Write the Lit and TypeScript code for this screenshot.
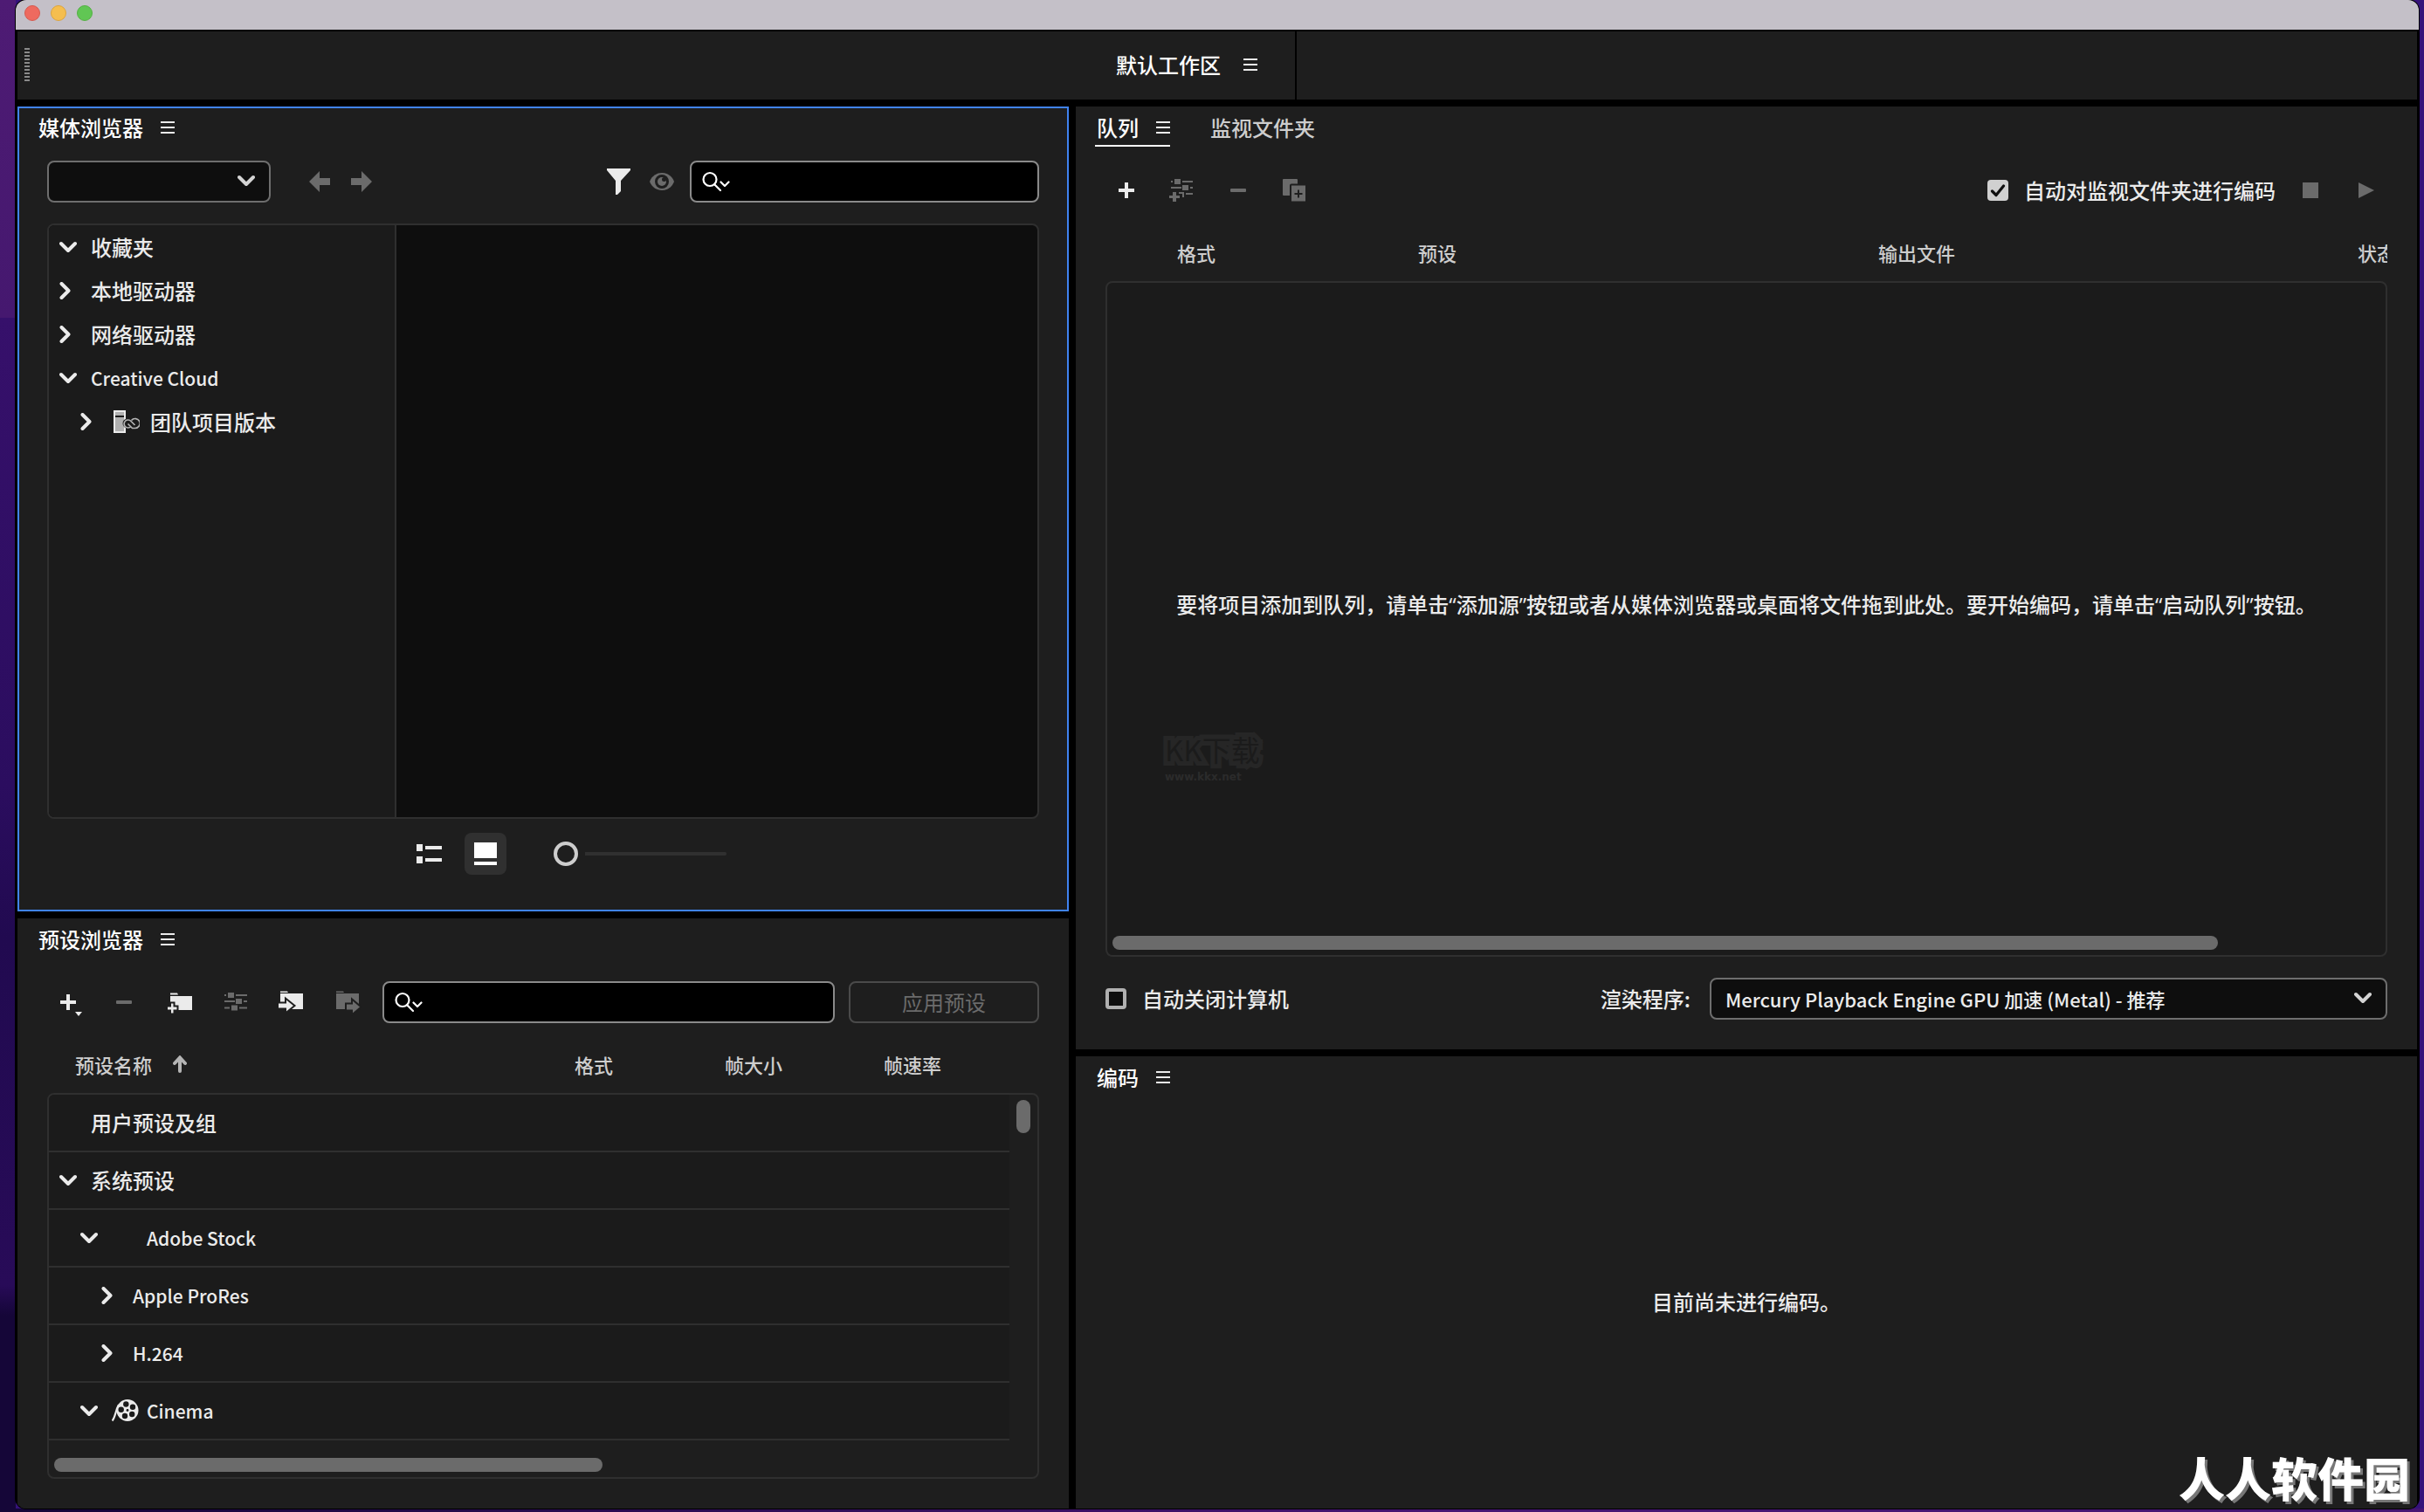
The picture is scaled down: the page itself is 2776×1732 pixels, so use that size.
import { LitElement, html, css, svg, nothing, type TemplateResult } from "lit";
import { customElement, property } from "lit/decorators.js";

/* ---------- icon library ---------- */

const slidersBase = svg`
  <path d="M3 7h2v2h-2zM16 7h13v2h-13zM3 14h12v2h-12zM25 14h4v2h-4zM7 5h7v6h-7zM16 12h7v6h-7z" />`;

const icons: Record<string, { w: number; h: number; body: TemplateResult | unknown }> = {
  menu: { w: 16, h: 14, body: svg`<path d="M0 0h16v2H0zM0 6h16v2H0zM0 12h16v2H0z" />` },
  down: {
    w: 20,
    h: 20,
    body: svg`<path d="M2 6l8 8 8-8" fill="none" stroke="currentColor" stroke-width="4" stroke-linecap="round" stroke-linejoin="round" />`,
  },
  right: {
    w: 20,
    h: 20,
    body: svg`<path d="M2.5 2l8 8-8 8" fill="none" stroke="currentColor" stroke-width="4" stroke-linecap="round" stroke-linejoin="round" />`,
  },
  back: { w: 24, h: 24, body: svg`<path d="M0 12L12 0v8h12v8H12v8z" />` },
  forward: { w: 24, h: 24, body: svg`<path d="M24 12L12 0v8H0v8h12v8z" />` },
  funnel: { w: 28, h: 30, body: svg`<path d="M1 0h27v2L17 14v12l-4 4h-2V14L1 2z" />` },
  eye: {
    w: 28,
    h: 20,
    body: svg`<path d="M0 10C5-3.300 23-3.300 28 10 23 23.300 5 23.300 0 10z" />
      <circle cx="14" cy="10" r="8" fill="#1e1e1e" />
      <circle cx="14" cy="10" r="5" />
      <circle cx="16.500" cy="7.500" r="2.500" fill="#1e1e1e" />`,
  },
  search: {
    w: 32,
    h: 24,
    body: svg`<g fill="none" stroke="currentColor" stroke-width="2.200" stroke-linecap="round" stroke-linejoin="round">
      <circle cx="9" cy="9.500" r="7.500" /><path d="M14.500 15.500l6.500 6.500" /><path d="M21.500 12.500l4.500 4.500 4.500-4.500" /></g>`,
  },
  plus: { w: 32, h: 32, body: svg`<path d="M14 7h4v7h7v4h-7v7h-4v-7H7v-4h7z" />` },
  plusMenu: {
    w: 32,
    h: 32,
    body: svg`<path d="M14 7h4v7h7v4h-7v7h-4v-7H7v-4h7z" /><path d="M24 27h8l-4 5z" />`,
  },
  minus: { w: 32, h: 32, body: svg`<rect x="7" y="14" width="18" height="4" rx="1" />` },
  sliders: {
    w: 32,
    h: 32,
    body: svg`${slidersBase}<path d="M3 21.500h6v2h-6zM20 21.500h9v2h-9zM11 19.500h7v6h-7z" />`,
  },
  slidersPlus: {
    w: 32,
    h: 32,
    body: svg`<path d="M3 5h2v2h-2zM16 5h12v2h-12zM3 12h12v2h-12zM25 12h3v2h-3zM7 3h7v6h-7zM16 10h7v6h-7zM20 19h8v2h-8z" />
      <path d="M12 18h6v6h-2v-4h-4z" /><path d="M5 18h4v4h4v3h-4v4h-4v-4h-4v-3h4z" />`,
  },
  duplicate: {
    w: 32,
    h: 32,
    body: svg`<rect x="3" y="3" width="17" height="19" rx="1" />
      <rect x="12" y="9.500" width="18" height="20" rx="1" stroke="#1e1e1e" stroke-width="2" />
      <path d="M21 15.500v9M16.500 20h9" stroke="#1e1e1e" stroke-width="2" />`,
  },
  folderPlus: {
    w: 32,
    h: 32,
    body: svg`<path d="M5 5.500h8l1 2H5zM5 9h25v16H5z" />
      <path d="M5 16.500h4.500v4h4v5h-4v4H5v-4H1v-5h4z" stroke="#1e1e1e" stroke-width="2" />`,
  },
  folderIn: {
    w: 32,
    h: 32,
    body: svg`<path d="M3 3.500h8l1 1.500H3zM3 6h26v18H3z" />
      <path d="M0 16.500h9v-5l10.500 8.500L9 28.500v-5H0z" stroke="#1e1e1e" stroke-width="2" />`,
  },
  folderOut: {
    w: 32,
    h: 32,
    body: svg`<path d="M3 3.500h8l1 1.500H3zM3 6h26v18H3z" />
      <path d="M14 17.500h7v-5l10.500 9-10.500 9v-5h-7z" stroke="#1e1e1e" stroke-width="2" />`,
  },
  list: {
    w: 30,
    h: 24,
    body: svg`<path d="M0 1h7v8H0zM10 3h19v4H10zM0 15h7v8H0zM10 17h19v4H10z" />`,
  },
  thumb: { w: 26, h: 26, body: svg`<path d="M0 0h26v18H0zM0 22h26v4H0z" />` },
  stop: { w: 32, h: 32, body: svg`<rect x="7" y="7" width="18" height="18" />` },
  play: { w: 32, h: 32, body: svg`<path d="M7 7l18 9-18 9z" />` },
  sortUp: {
    w: 16,
    h: 20,
    body: svg`<path d="M8 18V4M2 9l6-6.500L14 9" fill="none" stroke="currentColor" stroke-width="4" stroke-linecap="round" />`,
  },
  team: {
    w: 32,
    h: 32,
    body: svg`<rect x="3" y="4" width="12" height="24" fill="#b0b0b0" stroke="#ebebeb" stroke-width="2" />
      <path d="M4 10h10" stroke="#1b1b1b" stroke-width="2" />
      <path d="M18 12.500h9a5.500 5.500 0 0 1 0 11h-9a5.500 5.500 0 0 1 0-11z" fill="#1b1b1b" />
      <path d="M22 21.500a4.500 4.500 0 1 1 0-6l4.500 4.500M22.500 14.500a5.500 5.500 0 1 1 4 9h-3l-5-5" fill="none" stroke="#b4b4b4" stroke-width="1.700" />`,
  },
  reel: {
    w: 32,
    h: 32,
    body: svg`<circle cx="18" cy="15.500" r="12.500" />
      <path d="M8 9C4 16 4.500 23 .5 27.500" fill="none" stroke="currentColor" stroke-width="2.200" />
      <g fill="#1b1b1b">
        <circle cx="16.300" cy="8.500" r="3.200" /><circle cx="24" cy="11.800" r="3.200" />
        <circle cx="23.200" cy="20" r="3.200" /><circle cx="15" cy="22" r="3.200" />
        <circle cx="10.700" cy="14.800" r="3.200" /><circle cx="18" cy="15.500" r="1.400" />
      </g>`,
  },
};

const icon = (name: string) => {
  const i = icons[name];
  return html`<svg class="icon" width=${i.w} height=${i.h} viewBox="0 0 ${i.w} ${i.h}" fill="currentColor" aria-hidden="true">${i.body}</svg>`;
};

/* Western labels are set a little smaller than Chinese ones. */
const label = (text: string) => html`<span class=${/^[\x20-\x7e]+$/.test(text) ? "latin" : "han"}>${text}</span>`;

const base = css`
  :host {
    box-sizing: border-box;
    color: #ebebeb;
    font: 500 24px/30px "Noto Sans CJK SC", "Noto Sans", sans-serif;
  }
  *,
  *::before,
  *::after {
    box-sizing: border-box;
  }
  .icon {
    display: block;
    flex: none;
  }
  .latin {
    font-size: 21px;
  }
  button {
    display: flex;
    align-items: center;
    justify-content: center;
    margin: 0;
    padding: 0;
    border: 0;
    background: none;
    color: inherit;
    font: inherit;
  }
  button:disabled {
    color: #6b6b6b;
  }
  .panel {
    display: flex;
    flex-direction: column;
    height: 100%;
    min-height: 0;
    border: 2px solid #1e1e1e;
    background: #1e1e1e;
  }
  .panel.focused {
    border-color: #4083f0;
  }
  .tabs {
    display: flex;
    gap: 44px;
    height: 44px;
    padding-left: 20px;
    color: #cdcdcd;
  }
  .tab {
    display: flex;
    align-items: center;
    gap: 20px;
    padding-left: 2px;
    border-bottom: 2px solid transparent;
    border-top: 2px solid transparent;
  }
  .title {
    margin: 0;
    font: inherit;
    color: #fff;
  }
  .tab.active {
    color: #fff;
    border-bottom-color: #fff;
  }
  .tab .icon {
    color: #ebebeb;
  }
  .body {
    display: flex;
    flex: 1;
    flex-direction: column;
    min-height: 0;
    padding: 26px 32px 32px;
  }
  .bar {
    display: flex;
    align-items: center;
    height: 48px;
  }
  .tools {
    display: flex;
    gap: 32px;
    padding-left: 8px;
  }
  .search {
    position: relative;
    display: flex;
    height: 48px;
  }
  .search .icon {
    position: absolute;
    top: 12px;
    left: 14px;
    color: #fff;
  }
  .search input {
    width: 100%;
    padding: 0 16px 0 56px;
    border: 2px solid #8a8a8a;
    border-radius: 8px;
    outline: none;
    background: #000;
    color: #fff;
    font: inherit;
  }
  .drop {
    position: relative;
    display: flex;
    height: 48px;
    color: #d4d4d4;
  }
  .drop .icon {
    position: absolute;
    top: 13px;
    right: 18px;
    pointer-events: none;
  }
  .drop select {
    appearance: none;
    width: 100%;
    padding: 0 56px 0 16px;
    border: 2px solid #6e6e6e;
    border-radius: 8px;
    background: #0e0e0e;
    color: #ebebeb;
    font: inherit;
    font-size: 22px;
  }
  .check {
    display: flex;
    align-items: center;
    gap: 18px;
  }
  .check input {
    appearance: none;
    width: 24px;
    height: 24px;
    margin: 0;
    border: 4px solid #b0b0b0;
    border-radius: 4px;
    background: #0e0e0e;
  }
  .check input:checked {
    border: 0;
    background: #d0d0d0
      url("data:image/svg+xml,%3Csvg xmlns='http://www.w3.org/2000/svg' viewBox='0 0 24 24'%3E%3Cpath d='M5.500 13l4.500 4.500L18.500 7' fill='none' stroke='%23111' stroke-width='3.200' stroke-linecap='round' stroke-linejoin='round'/%3E%3C/svg%3E");
  }
  .grid {
    position: relative;
    display: flex;
    flex: 1;
    flex-direction: column;
    min-height: 0;
  }
  table {
    display: flex;
    flex: 1;
    flex-direction: column;
    min-height: 0;
  }
  thead {
    display: block;
    padding: 32px 0 18px;
  }
  thead tr {
    display: grid;
  }
  th {
    display: flex;
    align-items: center;
    gap: 24px;
    min-width: 0;
    padding: 0;
    overflow: hidden;
    color: #cdcdcd;
    font-size: 22px;
    font-weight: 500;
    white-space: nowrap;
  }
  tbody {
    display: block;
    flex: 1;
    min-height: 0;
    overflow: hidden;
    border: 2px solid #2f2f2f;
    border-radius: 8px;
    background: #1e1e1e;
  }
  .scroll {
    position: absolute;
    border-radius: 8px;
    background: #6b6b6b;
  }
  .scroll.horizontal {
    bottom: 8px;
    left: 8px;
    height: 16px;
  }
  .scroll.vertical {
    right: 10px;
    width: 16px;
  }
`;

/* ---------- media browser ---------- */

interface Node {
  label: string;
  level: number;
  open?: boolean;
  arrow?: boolean;
  icon?: string;
  slot?: boolean;
}

const folders: Node[] = [
  { label: "收藏夹", level: 0, arrow: true, open: true },
  { label: "本地驱动器", level: 0, arrow: true },
  { label: "网络驱动器", level: 0, arrow: true },
  { label: "Creative Cloud", level: 0, arrow: true, open: true },
  { label: "团队项目版本", level: 1, arrow: true, icon: "team" },
];

@customElement("media-browser")
export class MediaBrowser extends LitElement {
  static styles = [
    base,
    css`
      :host {
        display: block;
        min-height: 0;
      }
      .body {
        padding: 16px 32px 40px;
      }
      .source {
        width: 256px;
      }
      .nav {
        display: flex;
        gap: 24px;
        margin: 0 auto 0 44px;
      }
      .filters {
        display: flex;
        align-items: center;
        gap: 22px;
        margin-right: 18px;
      }
      .search {
        width: 400px;
      }
      .split {
        display: grid;
        flex: 1;
        grid-template-columns: 398px 1fr;
        margin: 24px 0 16px;
        overflow: hidden;
        border: 2px solid #2f2f2f;
        border-radius: 8px;
        background: #0e0e0e;
      }
      .tree {
        margin: 0;
        padding: 0;
        border-right: 2px solid #2f2f2f;
        background: #1b1b1b;
        list-style: none;
      }
      .node {
        display: flex;
        align-items: center;
        gap: 16px;
        height: 50px;
        padding-left: 12px;
      }
      .node.level1 {
        padding-left: 36px;
      }
      .kind {
        width: 28px;
      }
      .footer {
        display: flex;
        align-items: center;
        justify-content: center;
        height: 48px;
        padding-left: 56px;
      }
      .view {
        width: 48px;
        height: 48px;
        border-radius: 8px;
      }
      .view + .view {
        margin-left: 16px;
      }
      .view.on {
        background: #303030;
        color: #fff;
      }
      .zoom {
        appearance: none;
        width: 198px;
        height: 28px;
        margin: 0 0 0 54px;
        background: none;
      }
      .zoom::-webkit-slider-runnable-track {
        height: 4px;
        border-radius: 2px;
        background: linear-gradient(to right, transparent 36px, #303030 36px);
      }
      .zoom::-webkit-slider-thumb {
        appearance: none;
        width: 28px;
        height: 28px;
        margin-top: -12px;
        border: 4px solid #cdcdcd;
        border-radius: 50%;
        background: #1e1e1e;
      }
    `,
  ];

  render() {
    return html`<section class="panel focused">
      <div class="tabs">
        <div class="tab"><h2 class="title">媒体浏览器</h2><button aria-label="面板菜单">${icon("menu")}</button></div>
      </div>
      <div class="body">
        <div class="bar">
          <div class="drop source"><select aria-label="位置"><option></option></select>${icon("down")}</div>
          <div class="nav">
            <button disabled aria-label="后退">${icon("back")}</button>
            <button disabled aria-label="前进">${icon("forward")}</button>
          </div>
          <div class="filters">
            <button aria-label="筛选">${icon("funnel")}</button>
            <button disabled aria-label="查看">${icon("eye")}</button>
          </div>
          <div class="search">${icon("search")}<input type="text" aria-label="搜索媒体" /></div>
        </div>
        <div class="split">
          <ul class="tree">
            ${folders.map(
              (n) => html`<li class="node level${n.level}">
                ${icon(n.open ? "down" : "right")}
                ${n.icon ? html`<span class="kind">${icon(n.icon)}</span>` : nothing}
                ${label(n.label)}
              </li>`
            )}
          </ul>
          <div></div>
        </div>
        <div class="footer">
          <button class="view" aria-label="列表视图">${icon("list")}</button>
          <button class="view on" aria-label="缩览图视图">${icon("thumb")}</button>
          <input class="zoom" type="range" min="0" max="100" value="0" aria-label="缩放" />
        </div>
      </div>
    </section>`;
  }
}

/* ---------- preset browser ---------- */

const presets: Node[] = [
  { label: "用户预设及组", level: 0 },
  { label: "系统预设", level: 0, arrow: true, open: true },
  { label: "Adobe Stock", level: 1, arrow: true, open: true, slot: true },
  { label: "Apple ProRes", level: 2, arrow: true },
  { label: "H.264", level: 2, arrow: true },
  { label: "Cinema", level: 1, arrow: true, open: true, slot: true, icon: "reel" },
];

@customElement("preset-browser")
export class PresetBrowser extends LitElement {
  static styles = [
    base,
    css`
      :host {
        display: block;
        min-height: 0;
      }
      .search {
        flex: 1;
        margin: 0 16px 0 24px;
      }
      .apply {
        width: 218px;
        height: 48px;
        border: 2px solid #4a4a4a;
        border-radius: 8px;
        font-weight: 400;
      }
      thead tr {
        grid-template-columns: 604fr 172fr 182fr 178fr;
      }
      th:first-child {
        padding-left: 32px;
      }
      th .icon {
        color: #b4b4b4;
      }
      tbody tr {
        display: block;
        margin-right: 32px;
        border-bottom: 2px solid #2f2f2f;
        background: #1b1b1b;
      }
      td {
        display: flex;
        align-items: center;
        height: 64px;
        padding: 0 0 0 12px;
      }
      td.level1 {
        padding-left: 36px;
      }
      td.level2 {
        padding-left: 60px;
      }
      .arrow {
        width: 20px;
        margin-right: 16px;
      }
      .kind {
        width: 40px;
      }
      .scroll.horizontal {
        width: 628px;
      }
      .scroll.vertical {
        top: 88px;
        height: 38px;
      }
    `,
  ];

  render() {
    return html`<section class="panel">
      <div class="tabs">
        <div class="tab"><h2 class="title">预设浏览器</h2><button aria-label="面板菜单">${icon("menu")}</button></div>
      </div>
      <div class="body">
        <div class="bar">
          <div class="tools">
            <button aria-label="新建预设">${icon("plusMenu")}</button>
            <button disabled aria-label="删除预设">${icon("minus")}</button>
            <button aria-label="新建预设组">${icon("folderPlus")}</button>
            <button disabled aria-label="预设设置">${icon("sliders")}</button>
            <button aria-label="导入预设">${icon("folderIn")}</button>
            <button disabled aria-label="导出预设">${icon("folderOut")}</button>
          </div>
          <div class="search">${icon("search")}<input type="text" aria-label="搜索预设" /></div>
          <button class="apply" disabled>应用预设</button>
        </div>
        <div class="grid">
          <table>
            <thead>
              <tr>
                <th scope="col">预设名称 ${icon("sortUp")}</th>
                <th scope="col">格式</th>
                <th scope="col">帧大小</th>
                <th scope="col">帧速率</th>
              </tr>
            </thead>
            <tbody>
              ${presets.map(
                (n) => html`<tr>
                  <td class="level${n.level}">
                    <span class="arrow">${n.arrow ? icon(n.open ? "down" : "right") : nothing}</span>
                    ${n.slot ? html`<span class="kind">${n.icon ? icon(n.icon) : nothing}</span>` : nothing}
                    ${label(n.label)}
                  </td>
                </tr>`
              )}
            </tbody>
          </table>
          <div class="scroll horizontal"></div>
          <div class="scroll vertical"></div>
        </div>
      </div>
    </section>`;
  }
}

/* ---------- queue ---------- */

@customElement("render-queue")
export class RenderQueue extends LitElement {
  static styles = [
    base,
    css`
      :host {
        display: block;
        min-height: 0;
      }
      .bar .check {
        margin-right: 24px;
        margin-left: auto;
      }
      .transport {
        display: flex;
        gap: 32px;
        padding-right: 8px;
      }
      thead tr {
        grid-template-columns: 358fr 527fr 549fr 34fr;
      }
      th:first-child {
        padding-left: 82px;
      }
      tbody {
        display: flex;
        background: #1b1b1b;
      }
      tbody tr {
        display: flex;
        flex: 1;
      }
      td {
        display: flex;
        flex: 1;
        align-items: center;
        justify-content: center;
        padding: 0 0 32px;
        font-family: "Open Sans", "Noto Sans CJK SC", sans-serif;
      }
      .scroll.horizontal {
        right: 194px;
      }
      .mark {
        position: absolute;
        top: 596px;
        left: 68px;
        color: #1b1b1b;
        font-size: 33px;
        font-weight: 400;
        line-height: 40px;
      }
      .mark span {
        display: block;
        -webkit-text-stroke: 10px #262626;
        paint-order: stroke fill;
      }
      .mark small {
        display: block;
        margin-top: 4px;
        color: #2b2b2b;
        font: 700 12px/16px "DejaVu Sans", sans-serif;
      }
      .footer {
        display: flex;
        align-items: center;
        justify-content: space-between;
        margin-top: 24px;
      }
      .engine {
        display: flex;
        align-items: center;
        gap: 22px;
      }
      .engine .drop {
        width: 776px;
      }
    `,
  ];

  render() {
    return html`<section class="panel">
      <div class="tabs">
        <div class="tab active"><h2 class="title">队列</h2><button aria-label="面板菜单">${icon("menu")}</button></div>
        <button class="tab">监视文件夹</button>
      </div>
      <div class="body">
        <div class="bar">
          <div class="tools">
            <button aria-label="添加源">${icon("plus")}</button>
            <button disabled aria-label="添加输出">${icon("slidersPlus")}</button>
            <button disabled aria-label="移除">${icon("minus")}</button>
            <button disabled aria-label="复制">${icon("duplicate")}</button>
          </div>
          <label class="check"><input type="checkbox" checked />自动对监视文件夹进行编码</label>
          <div class="transport">
            <button disabled aria-label="停止队列">${icon("stop")}</button>
            <button disabled aria-label="启动队列">${icon("play")}</button>
          </div>
        </div>
        <div class="grid">
          <table>
            <thead>
              <tr>
                <th scope="col">格式</th>
                <th scope="col">预设</th>
                <th scope="col">输出文件</th>
                <th scope="col">状态</th>
              </tr>
            </thead>
            <tbody>
              <tr>
                <td colspan="4">要将项目添加到队列，请单击“添加源”按钮或者从媒体浏览器或桌面将文件拖到此处。要开始编码，请单击“启动队列”按钮。</td>
              </tr>
            </tbody>
          </table>
          <div class="mark"><span>KK下载</span><small>www.kkx.net</small></div>
          <div class="scroll horizontal"></div>
        </div>
        <div class="footer">
          <label class="check"><input type="checkbox" />自动关闭计算机</label>
          <div class="engine">
            <label for="engine">渲染程序:</label>
            <div class="drop">
              <select id="engine"><option>Mercury Playback Engine GPU 加速 (Metal) - 推荐</option></select>${icon("down")}
            </div>
          </div>
        </div>
      </div>
    </section>`;
  }
}

/* ---------- encoding ---------- */

@customElement("encoding-panel")
export class EncodingPanel extends LitElement {
  @property() message = "目前尚未进行编码。";

  static styles = [
    base,
    css`
      :host {
        display: block;
        min-height: 0;
      }
      .empty {
        display: flex;
        flex: 1;
        align-items: center;
        justify-content: center;
        margin: 0;
      }
    `,
  ];

  render() {
    return html`<section class="panel">
      <div class="tabs">
        <div class="tab"><h2 class="title">编码</h2><button aria-label="面板菜单">${icon("menu")}</button></div>
      </div>
      <p class="empty">${this.message}</p>
    </section>`;
  }
}

/* ---------- window ---------- */

@customElement("app-root")
export class AppRoot extends LitElement {
  static styles = [
    base,
    css`
      :host {
        position: relative;
        display: block;
        height: 100vh;
        padding: 0 6px 4px 18px;
        overflow: hidden;
        background: linear-gradient(#4e1b74, #45186f 21%, #36106b 21%, #2b0d5f 52%, #210a50 62%, #280b58 85%, #150638 87%) left /
            18px 100% no-repeat,
          linear-gradient(to right, #150638 18px, #471573 60%) bottom / 100% 4px no-repeat, #35127a;
      }
      .window {
        display: flex;
        flex-direction: column;
        height: 100%;
        padding: 0 2px;
        overflow: hidden;
        border-radius: 12px;
        background: #000;
        box-shadow: 0 0 0 1px #000;
      }
      .titlebar {
        display: flex;
        flex: none;
        gap: 12px;
        height: 34px;
        margin: 0 -2px 2px;
        padding: 6px 10px;
        background: #c4c0c8;
      }
      .light {
        width: 18px;
        height: 18px;
        border: 1px solid #d65a50;
        border-radius: 50%;
        background: #ee6a5f;
      }
      .light.minimize {
        border-color: #dba43f;
        background: #f5be4f;
      }
      .light.zoom {
        border-color: #55b044;
        background: #61c654;
      }
      .workspace {
        display: grid;
        flex: none;
        grid-template-columns: 1465fr 1283fr;
        height: 78px;
        margin-bottom: 8px;
        background: #1e1e1e;
      }
      .current {
        display: flex;
        align-items: center;
        justify-content: flex-end;
        gap: 26px;
        padding: 0 43px 2px 8px;
        border-right: 2px solid #000;
      }
      .grip {
        width: 6px;
        height: 38px;
        margin-right: auto;
        background: repeating-linear-gradient(#8a8a8a 0 2px, transparent 2px 4px);
      }
      .panels {
        display: grid;
        flex: 1;
        grid-template-columns: 1204fr 1536fr;
        gap: 8px;
        min-height: 0;
      }
      .column {
        display: grid;
        gap: 8px;
        min-width: 0;
        min-height: 0;
      }
      .column.left {
        grid-template-rows: 922fr 676fr;
      }
      .column.right {
        grid-template-rows: 1080fr 518fr;
      }
      .brand {
        position: absolute;
        right: 16px;
        bottom: 10px;
        color: #fff;
        font-size: 53px;
        font-weight: 900;
        line-height: 60px;
        text-shadow: 3px 3px 0 #777;
      }
    `,
  ];

  render() {
    return html`<main class="window">
        <header class="titlebar">
          <button class="light" aria-label="关闭"></button>
          <button class="light minimize" aria-label="最小化"></button>
          <button class="light zoom" aria-label="缩放"></button>
        </header>
        <nav class="workspace">
          <div class="current">
            <span class="grip"></span>
            <h1 class="title">默认工作区</h1>
            <button aria-label="工作区菜单">${icon("menu")}</button>
          </div>
          <div></div>
        </nav>
        <div class="panels">
          <div class="column left"><media-browser></media-browser><preset-browser></preset-browser></div>
          <div class="column right"><render-queue></render-queue><encoding-panel></encoding-panel></div>
        </div>
      </main>
      <div class="brand">人人软件园</div>`;
  }
}
